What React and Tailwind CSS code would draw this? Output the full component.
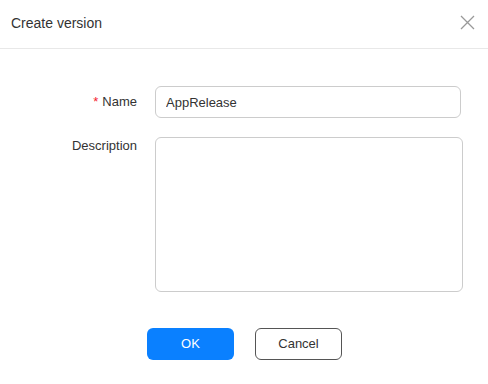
import React, { useState } from 'react';

const App = () => {
  const [name, setName] = useState('AppRelease');
  const [desc, setDesc] = useState('');

  return (
    <div className="w-[488px] h-[384px] bg-white text-[#333] font-['Liberation_Sans',Arial,sans-serif]">
      {/* header */}
      <div className="h-[49px] flex items-center justify-between pl-[11px] pr-[13px] border-b border-[#e8e8e8]">
        <h2 className="text-[14px] text-[#333] -mt-[1px]">Create version</h2>
        <button className="w-[16px] h-[16px] flex items-center justify-center -mt-[4px]">
          <svg width="15" height="15" viewBox="0 0 15 15" fill="none" stroke="#999" strokeWidth="1.3">
            <path d="M1 1 L14 14 M14 1 L1 14" />
          </svg>
        </button>
      </div>

      {/* form */}
      <div className="pt-[37px] flex flex-col gap-[19px]">
        <div className="flex items-center">
          <label className="w-[137px] text-right text-[13px] text-[#333]">
            <span className="text-[#f5222d] mr-[4px]">*</span>Name
          </label>
          <input
            value={name}
            onChange={e => setName(e.target.value)}
            className="ml-[18px] w-[306px] h-[32px] px-[10px] text-[13px] text-[#333] border border-[#ccc] rounded-[6px] outline-none"
          />
        </div>
        <div className="flex items-start">
          <label className="w-[137px] text-right text-[13px] text-[#333] -mt-[1px]">Description</label>
          <textarea
            value={desc}
            onChange={e => setDesc(e.target.value)}
            className="ml-[18px] w-[308px] h-[155px] px-[10px] py-[6px] text-[13px] border border-[#ccc] rounded-[6px] outline-none resize-none"
          />
        </div>
      </div>

      {/* footer */}
      <div className="flex justify-center gap-[21px] mt-[36px] pl-[1px]">
        <button className="w-[87px] h-[32px] rounded-[6px] bg-[#0a80ff] text-white text-[13px] font-medium">OK</button>
        <button className="w-[87px] h-[32px] rounded-[6px] border border-[#555] text-[#333] text-[13px] bg-white">Cancel</button>
      </div>
    </div>
  );
};

export default App;
